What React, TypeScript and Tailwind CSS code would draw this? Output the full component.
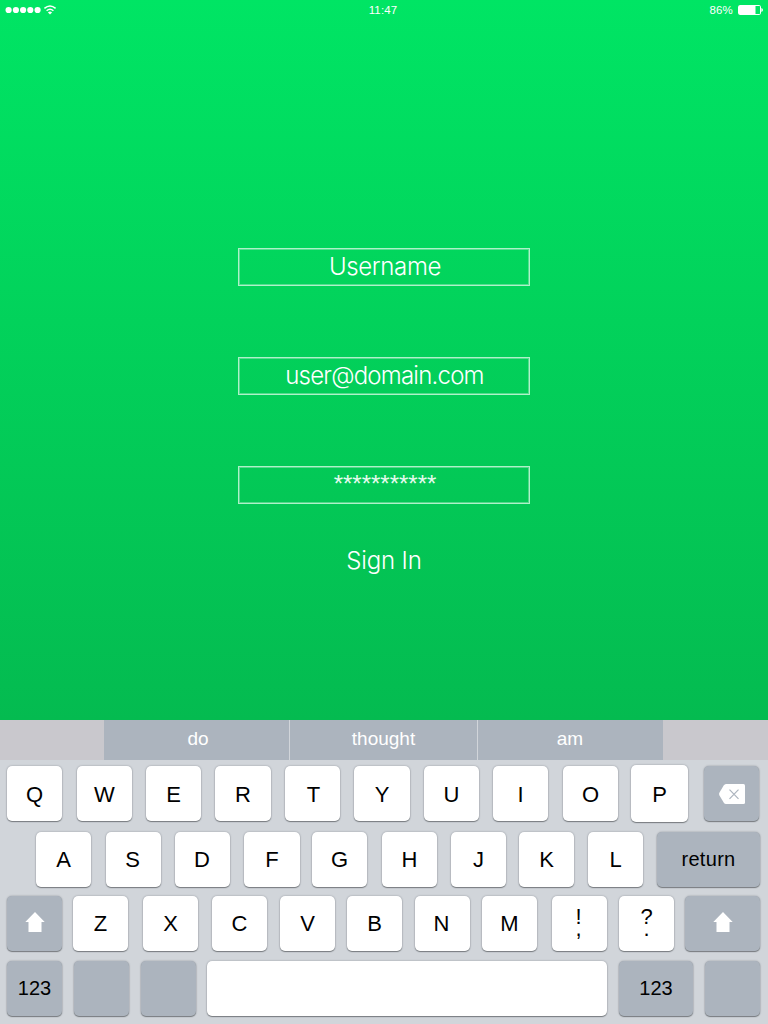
import React from "react";

type KeyProps = { label?: string; className: string; gray?: boolean; children?: React.ReactNode };

function Key({ label, className, gray, children }: KeyProps) {
  return (
    <button
      type="button"
      className={`flex h-[55px] shrink-0 items-center justify-center rounded-[5px] text-[22px] leading-none text-black shadow-[0_1px_1px_#787c80,0_0_2px_#8d9299] ${gray ? "bg-[#acb4be]" : "bg-white"} ${className}`}
    >
      {children ?? label}
    </button>
  );
}

function ShiftIcon() {
  return (
    <svg className="mb-[3px] h-5 w-5" viewBox="0 0 20 20" fill="white">
      <path d="M10 0 L19.7 10 H16.5 V20 H3.5 V10 H0.3 Z" />
    </svg>
  );
}

function DoubleKey({ top, bottom }: { top: string; bottom: string }) {
  return (
    <span className="pb-[2px] text-center text-[22px] leading-[12px]">
      {top}
      <br />
      {bottom}
    </span>
  );
}

function StatusBar() {
  return (
    <header className="grid h-5 grid-cols-3 items-center text-[11.5px] leading-none text-white">
      <div className="flex items-center pl-[5px]">
        <svg className="h-[10px] w-[52px]" viewBox="0 0 52 10" fill="white">
          <circle cx="3.6" cy="5" r="3.1" />
          <circle cx="10.9" cy="5" r="3.1" />
          <circle cx="18.1" cy="5" r="3.1" />
          <circle cx="25.3" cy="5" r="3.1" />
          <circle cx="32.6" cy="5" r="3.1" />
          <g fill="none" stroke="white" strokeWidth="1.5">
            <path d="M39.4 3.4 Q45 -1.5 50.6 3.4" />
            <path d="M41.6 5.8 Q45 2.8 48.4 5.8" />
          </g>
          <path d="M45 9.4 L42.9 7.4 Q45 5.8 47.1 7.4 Z" />
        </svg>
      </div>
      <div className="pt-[2px] pr-[2px] text-center tracking-[0.15px]">11:47</div>
      <div className="flex items-center justify-end gap-[5px] pr-[5px]">
        <span className="pt-[2px] tracking-[0.2px]">86%</span>
        <svg className="h-[10px] w-[25px]" viewBox="0 0 25 10">
          <rect x="0.5" y="0.5" width="22" height="9" rx="1.2" fill="none" stroke="white" />
          <rect x="1" y="1" width="16.5" height="8" fill="white" />
          <path d="M23.3 3 Q25 3.4 25 5 Q25 6.6 23.3 7 Z" fill="white" />
        </svg>
      </div>
    </header>
  );
}

const boxClass =
  "flex h-[38px] w-[292px] items-center justify-center border border-[#aff1c9] shadow-[inset_0_0_0_1px_rgba(255,255,255,0.32)]";

function Suggestions() {
  return (
    <div className="flex h-10 bg-[#c9c8cd] text-[19px] leading-none text-white">
      <div className="ml-[104px] flex w-[185px] items-center justify-center bg-[#acb4be] pb-[3px] pl-[3px]">do</div>
      <div className="flex w-[188px] items-center justify-center border-l border-[#d1d5da] bg-[#acb4be] pb-[3px]">thought</div>
      <div className="flex w-[186px] items-center justify-center border-l border-[#d1d5da] bg-[#acb4be] pr-px pb-[3px]">am</div>
    </div>
  );
}

function Keyboard() {
  return (
    <section className="h-[304px] bg-[#d1d5da]">
      <Suggestions />
      <div className="flex h-[66px] items-start pt-[6px]">
        <Key label="Q" className="ml-[7px] w-[55px] pt-[3px]" />
        <Key label="W" className="ml-[15px] w-[55px] pt-[3px]" />
        <Key label="E" className="ml-[14px] w-[55px] pt-[3px]" />
        <Key label="R" className="ml-[14px] w-[56px] pt-[3px]" />
        <Key label="T" className="ml-[14px] w-[55px] pt-[3px] pl-[2px]" />
        <Key label="Y" className="ml-[14px] w-[56px] pt-[3px]" />
        <Key label="U" className="ml-[14px] w-[55px] pt-[3px]" />
        <Key label="I" className="ml-[14px] w-[55px] pt-[3px]" />
        <Key label="O" className="ml-[15px] w-[55px] pt-[3px]" />
        <Key label="P" className="-mt-px ml-[13px] h-[57px] w-[57px] pt-[3px]" />
        <Key gray className="ml-[16px] w-[55px]">
          <svg className="mt-px h-5 w-[26px]" viewBox="0 0 26 20">
            <path d="M7 0 H24.5 Q26 0 26 1.5 V18.5 Q26 20 24.5 20 H7 Q5.6 20 4.7 18.5 L0.5 11.5 Q-.3 10 .5 8.5 L4.7 1.5 Q5.6 0 7 0 Z" fill="white" />
            <path d="M10.5 5.7 L19.5 14.9 M19.5 5.7 L10.5 14.9" stroke="#acb4be" strokeWidth="1.2" />
          </svg>
        </Key>
      </div>
      <div className="flex h-16 items-start pt-[6px]">
        <Key label="A" className="ml-9 w-[55px] pt-px" />
        <Key label="S" className="ml-[15px] w-[55px] pt-px pr-[2px]" />
        <Key label="D" className="ml-[14px] w-[55px] pt-px pr-px" />
        <Key label="F" className="ml-[14px] w-[56px] pt-px" />
        <Key label="G" className="ml-3 w-[55px] pt-px" />
        <Key label="H" className="ml-[15px] w-[55px] pt-px" />
        <Key label="J" className="ml-[14px] w-[55px] pt-px" />
        <Key label="K" className="ml-[13px] w-[55px] pt-px" />
        <Key label="L" className="ml-[14px] w-[55px] pt-px" />
        <Key gray className="ml-[14px] w-[103px]">
          <span className="pb-px text-[20px] tracking-[0.3px]">return</span>
        </Key>
      </div>
      <div className="flex h-[65px] items-start pt-[6px]">
        <Key gray className="ml-[7px] w-[55px]"><ShiftIcon /></Key>
        <Key label="Z" className="ml-[11px] w-[55px] pt-px" />
        <Key label="X" className="ml-[15px] w-[55px] pt-px" />
        <Key label="C" className="ml-[14px] w-[55px] pt-px" />
        <Key label="V" className="ml-[13px] w-[55px] pt-px" />
        <Key label="B" className="ml-3 w-[55px] pt-px" />
        <Key label="N" className="ml-[13px] w-[55px] pt-px pr-[2px]" />
        <Key label="M" className="ml-3 w-[55px] pt-px" />
        <Key className="ml-[15px] w-[55px] pr-[2px]"><DoubleKey top="!" bottom="," /></Key>
        <Key className="ml-3 w-[55px]"><DoubleKey top="?" bottom="." /></Key>
        <Key gray className="ml-[11px] w-[75px]"><ShiftIcon /></Key>
      </div>
      <div className="flex h-[63px] items-start pt-[6px]">
        <Key gray className="ml-[7px] w-[55px]"><span className="pb-px text-[20px]">123</span></Key>
        <Key gray className="ml-[12px] w-[55px]" />
        <Key gray className="ml-[12px] w-[55px]" />
        <Key className="ml-[11px] w-[400px]" />
        <Key gray className="ml-[12px] w-[74px]"><span className="pb-px text-[20px]">123</span></Key>
        <Key gray className="ml-[12px] w-[55px]" />
      </div>
    </section>
  );
}

export default function App() {
  return (
    <div className="flex h-[1024px] w-[768px] flex-col overflow-hidden bg-[#d1d5da] font-['Liberation_Sans',Arial,sans-serif]">
      <main className="flex h-[720px] flex-col bg-linear-to-b from-[#00e564] to-[#04bb50]">
        <StatusBar />
        <form className="mt-[228px] flex flex-col items-center font-[Inter,sans-serif] text-[24px] leading-none font-light text-white">
          <div className={boxClass}><span className="pb-px pl-[2px] tracking-[-0.35px]">Username</span></div>
          <div className={`mt-[71px] ${boxClass}`}><span className="pl-px tracking-[-0.78px]">user@domain.com</span></div>
          <div className={`mt-[71px] ${boxClass}`}><span className="pb-[2px] pl-[2px] font-['Liberation_Sans',sans-serif] text-[#e6fbee]">***********</span></div>
          <button type="button" className="mt-[45px] tracking-[-0.15px]">Sign In</button>
        </form>
      </main>
      <Keyboard />
    </div>
  );
}
